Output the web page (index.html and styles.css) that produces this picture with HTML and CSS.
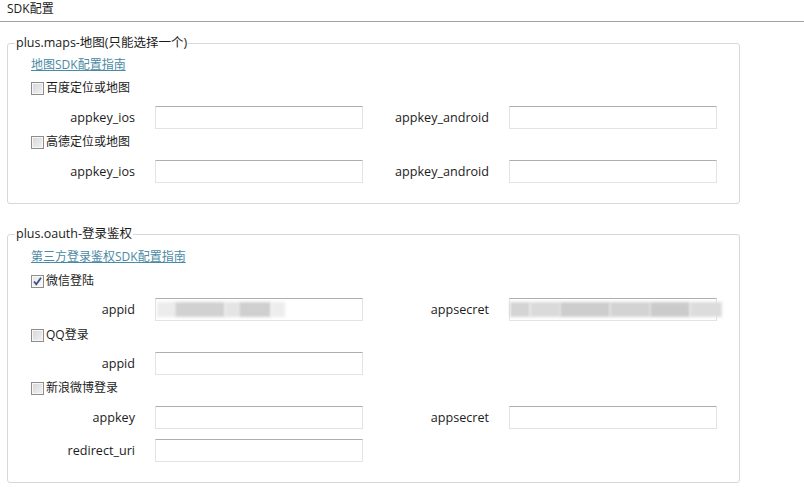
FILE: index.html
```html
<!DOCTYPE html>
<html lang="zh-CN">
<head>
<meta charset="utf-8">
<title>SDK配置</title>
<link rel="stylesheet" href="styles.css">
</head>
<body>
<div class="header">SDK配置</div>

<fieldset class="group group-maps">
  <legend>plus.maps-地图(只能选择一个)</legend>
  <div class="content">
    <a class="guide" href="#">地图SDK配置指南</a>
    <label class="cb m5"><span class="box"></span>百度定位或地图</label>
    <div class="frow m9">
      <span class="lbl">appkey_ios</span><div class="input"></div>
      <span class="lbl lbl2">appkey_android</span><div class="input"></div>
    </div>
    <label class="cb m4"><span class="box"></span>高德定位或地图</label>
    <div class="frow m9">
      <span class="lbl">appkey_ios</span><div class="input"></div>
      <span class="lbl lbl2">appkey_android</span><div class="input"></div>
    </div>
  </div>
</fieldset>

<fieldset class="group group-oauth">
  <legend>plus.oauth-登录鉴权</legend>
  <div class="content">
    <a class="guide g2" href="#">第三方登录鉴权SDK配置指南</a>
    <label class="cb m6"><span class="box checked"><svg viewBox="0 0 11 11" width="11" height="11"><path d="M2 5.5 L4.3 8.3 L9 1.8" fill="none" stroke="#3d4f8c" stroke-width="1.8"/></svg></span>微信登陆</label>
    <div class="frow m8">
      <span class="lbl">appid</span>
      <div class="input blurred">
        <span class="bl b1"></span><span class="bl b2"></span><span class="bl b3"></span><span class="bl b4"></span><span class="bl b5"></span>
      </div>
      <span class="lbl lbl2">appsecret</span>
      <div class="input blurred">
        <span class="bl s1"></span><span class="bl s2"></span><span class="bl s3"></span><span class="bl s4"></span><span class="bl s5"></span><span class="bl s6"></span>
      </div>
    </div>
    <label class="cb m5"><span class="box"></span>QQ登录</label>
    <div class="frow m8">
      <span class="lbl">appid</span><div class="input"></div>
    </div>
    <label class="cb m4"><span class="box"></span>新浪微博登录</label>
    <div class="frow m9">
      <span class="lbl">appkey</span><div class="input"></div>
      <span class="lbl lbl2">appsecret</span><div class="input"></div>
    </div>
    <div class="frow m10">
      <span class="lbl">redirect_uri</span><div class="input"></div>
    </div>
  </div>
</fieldset>
</body>
</html>
```

FILE: styles.css
```css
html, body {
  margin: 0;
  padding: 0;
  background: #ffffff;
}
body {
  width: 804px;
  height: 490px;
  overflow: hidden;
  font-family: "Open Sans", "Noto Sans CJK SC", sans-serif;
  font-size: 12px;
  color: #1b1b1b;
}
.header {
  height: 21px;
  line-height: 18px;
  padding-left: 7px;
  border-bottom: 1px solid #a3a3a3;
}
.group {
  margin: 12px 64px 0 7px;
  padding: 0 0 20px 7px;
  border: 1px solid #d7d7d7;
  border-radius: 3px;
  min-width: 0;
}
.group-oauth {
  margin-top: 21px;
}
legend {
  padding: 0 1px;
  line-height: 18px;
  height: 18px;
  font-size: 12.5px;
}
.content {
  padding-left: 16px;
  display: flex;
  flex-direction: column;
  align-items: flex-start;
}
.guide {
  margin-top: 4px;
  line-height: 18px;
  color: #4a8aa4;
  text-decoration: underline;
}
.guide.g2 { margin-top: 5px; }
.cb {
  display: flex;
  align-items: center;
  height: 18px;
  line-height: 18px;
}
.box {
  width: 11px;
  height: 11px;
  border: 1px solid #8d8d8d;
  background: linear-gradient(135deg, #d6d6d6, #f2f2f2);
  margin-right: 2px;
  box-shadow: inset 0 0 0 1px #f7f7f7;
  display: flex;
  align-items: center;
  justify-content: center;
}
.box.checked {
  background: linear-gradient(135deg, #e6e6e6, #fafafa);
}
.m4 { margin-top: 4px; }
.m5 { margin-top: 5px; }
.m6 { margin-top: 6px; }
.m8 { margin-top: 8px; }
.m9 { margin-top: 9px; }
.m10 { margin-top: 10px; }
.frow {
  display: flex;
  align-items: center;
  height: 23px;
}
.lbl {
  width: 104px;
  text-align: right;
  margin-right: 20px;
  white-space: nowrap;
  font-size: 12.6px;
}
.lbl2 {
  width: 126px;
}
.input {
  width: 208px;
  height: 23px;
  box-sizing: border-box;
  border: 1px solid #e2e3e7;
  border-top-color: #aeaeb0;
  background: #fff;
  display: flex;
  align-items: center;
}
.bl {
  height: 15px;
  filter: blur(1.5px);
  flex: none;
}
.b1 { width: 18px; background: #ececec; margin-left: 1px; }
.b2 { width: 50px; background: #d1d1d1; }
.b3 { width: 14px; background: #e4e4e4; }
.b4 { width: 32px; background: #cfcfcf; }
.b5 { width: 14px; background: #ededed; }
.s1 { width: 20px; background: #d4d4d4; }
.s2 { width: 30px; background: #dadada; }
.s3 { width: 50px; background: #cdcdcd; }
.s4 { width: 40px; background: #d3d3d3; }
.s5 { width: 40px; background: #cbcbcb; }
.s6 { width: 32px; background: #dcdcdc; }
```
